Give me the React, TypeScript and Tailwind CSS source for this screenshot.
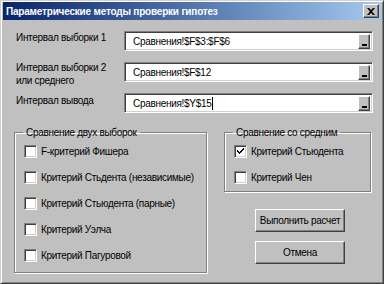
const font = { fontFamily: '"Liberation Sans", Arial, sans-serif' }

const inputs = [
    { label: ['Интервал выборки 1'], value: 'Сравнения!$F$3:$F$6', offset: 'mt-0', caret: false },
    { label: ['Интервал выборки 2', 'или среднего'], value: 'Сравнения!$F$12', offset: 'mt-[-1px]', caret: false },
    { label: ['Интервал вывода'], value: 'Сравнения!$Y$15', offset: 'mt-[1px]', caret: true }
]

const twoSamples = [
    { label: 'F-критерий Фишера', checked: false },
    { label: 'Критерий Стьдента (независимые)', checked: false },
    { label: 'Критерий Стьюдента (парные)', checked: false },
    { label: 'Критерий Уэлча', checked: false },
    { label: 'Критерий Пагуровой', checked: false }
]

const vsMean = [
    { label: 'Критерий Стьюдента', checked: true },
    { label: 'Критерий Чен', checked: false }
]

const text = 'text-[10px] leading-[13px] tracking-[-0.3px] text-black whitespace-nowrap'

function CheckBox({ checked }: { checked: boolean }) {
    return (
        <span className="w-[13px] h-[13px] shrink-0 bg-white border border-t-[#808080] border-l-[#808080] border-r-white border-b-white shadow-[inset_1px_1px_0_#404040,inset_-1px_-1px_0_#d4d0c8] flex items-center justify-center">
            {checked && (
                <svg width="7" height="7" viewBox="0 0 7 7">
                    <path d="M0 2h1v1h1v1h1V3h1V2h1V1h1V0h1v2H6v1H5v1H4v1H3v1H2V5H1V4H0z" fill="#000" />
                </svg>
            )}
        </span>
    )
}

function Option({ label, checked }: { label: string; checked: boolean }) {
    return (
        <div className="h-[26px] flex items-center gap-[4px] pl-[9px]">
            <CheckBox checked={checked} />
            <span className={text}>{label}</span>
        </div>
    )
}

function Group({ title, width, height, items }: { title: string; width: string; height: string; items: { label: string; checked: boolean }[] }) {
    return (
        <fieldset className={`${width} ${height} border border-[#808080] shadow-[1px_1px_0_#fff,inset_1px_1px_0_#fff] flex flex-col`}>
            <legend className={`ml-[8px] px-[3px] ${text}`}>{title}</legend>
            <div className="mt-[-1px] flex flex-col">
                {items.map(item => (
                    <Option key={item.label} label={item.label} checked={item.checked} />
                ))}
            </div>
        </fieldset>
    )
}

function Button({ children }: { children: string }) {
    return (
        <button className={`w-[90px] h-[23px] bg-[#c0c0c0] border border-t-white border-l-white border-r-[#404040] border-b-[#404040] shadow-[inset_-1px_-1px_0_#808080] ${text}`}>
            {children}
        </button>
    )
}

export default function App() {
    return (
        <div style={font} className="w-[384px] h-[284px] bg-[#c0c0c0] border border-t-[#d4d0c8] border-l-[#d4d0c8] border-r-[#404040] border-b-[#404040] shadow-[inset_1px_1px_0_#fff,inset_-1px_-1px_0_#808080] px-[2px] pt-[1px] pb-[2px] flex flex-col select-none">
            <div className="h-[18px] shrink-0 bg-gradient-to-r from-[#0a246a] to-[#a6caf0] flex items-center justify-between pl-[3px] pr-[2px]">
                <span className="text-[10px] tracking-[-0.2px] font-bold text-white whitespace-nowrap">Параметрические методы проверки гипотез</span>
                <span className="w-[16px] h-[14px] bg-[#c0c0c0] border border-t-white border-l-white border-r-[#404040] border-b-[#404040] shadow-[inset_-1px_-1px_0_#808080] flex items-center justify-center">
                    <svg width="8" height="7" viewBox="0 0 8 7">
                        <path d="M0 0h2l2 2 2-2h2L5 3.5 8 7H6L4 5 2 7H0l3-3.5z" fill="#000" />
                    </svg>
                </span>
            </div>

            <div className="flex-1 pl-[11px] pt-[11px] flex flex-col">
                <div className="flex flex-col gap-[11px]">
                    {inputs.map(row => (
                        <div key={row.value} className="h-[20px] flex items-start">
                            <div className={`w-[110px] pl-[2px] ${row.offset} ${text}`}>
                                {row.label.map(line => (
                                    <div key={line}>{line}</div>
                                ))}
                            </div>
                            <div className="w-[249px] h-[20px] bg-white border border-t-[#808080] border-l-[#808080] border-r-white border-b-white shadow-[inset_1px_1px_0_#404040,inset_-1px_-1px_0_#d4d0c8] flex items-center pl-[8px] pr-[2px]">
                                <span className={`flex-1 flex items-center ${text}`}>
                                    {row.value}
                                    {row.caret && <span className="w-px h-[13px] bg-black ml-px" />}
                                </span>
                                <span className="w-[12px] h-[15px] bg-[#c0c0c0] border border-t-white border-l-white border-r-[#404040] border-b-[#404040] shadow-[inset_-1px_-1px_0_#808080] flex items-end justify-center pb-[2px]">
                                    <span className="w-[5px] h-[2px] bg-black" />
                                </span>
                            </div>
                        </div>
                    ))}
                </div>

                <div className="mt-[13px] flex gap-[17px]">
                    <Group title="Сравнение двух выборок" width="w-[193px]" height="h-[147px]" items={twoSamples} />
                    <div className="flex flex-col">
                        <Group title="Сравнение со средним" width="w-[147px]" height="h-[66px]" items={vsMean} />
                        <div className="mt-[17px] ml-[31px] flex flex-col gap-[9px]">
                            <Button>Выполнить расчет</Button>
                            <Button>Отмена</Button>
                        </div>
                    </div>
                </div>
            </div>
        </div>
    )
}
